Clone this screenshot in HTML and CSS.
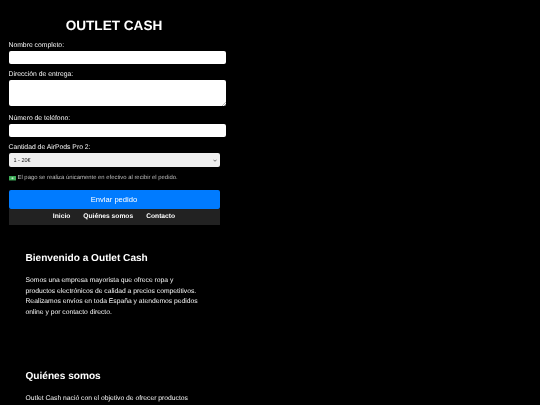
FILE: index.html
```html
<!DOCTYPE html>
<html lang="es">
<head>
<meta charset="utf-8">
<title>Outlet Cash</title>
<link rel="stylesheet" href="styles.css">
</head>
<body>
<main class="page">
  <h1 class="title">OUTLET CASH</h1>
  <form class="form">
    <label class="label">Nombre completo:</label>
    <input class="field field-input" type="text">
    <label class="label">Dirección de entrega:</label>
    <textarea class="field field-area"></textarea>
    <label class="label">Número de teléfono:</label>
    <input class="field field-input" type="tel">
    <label class="label">Cantidad de AirPods Pro 2:</label>
    <select class="select"><option>1 - 20€</option></select>
    <p class="note"><svg class="bill" viewBox="0 0 8 5"><rect width="8" height="5" fill="#3fae5a"/><circle cx="4" cy="2.5" r="1.2" fill="#bfe8c6"/></svg>El pago se realiza únicamente en efectivo al recibir el pedido.</p>
    <button class="submit" type="button">Enviar pedido</button>
  </form>
  <nav class="nav"><a>Inicio</a><a>Quiénes somos</a><a>Contacto</a></nav>
  <section class="section">
    <h2 class="heading">Bienvenido a Outlet Cash</h2>
    <p class="text">Somos una empresa mayorista que ofrece ropa y productos electrónicos de calidad a precios competitivos. Realizamos envíos en toda España y atendemos pedidos online y por contacto directo.</p>
  </section>
  <section class="section section-next">
    <h2 class="heading">Quiénes somos</h2>
    <p class="text">Outlet Cash nació con el objetivo de ofrecer productos</p>
  </section>
</main>
</body>
</html>
```
FILE: styles.css
```css
html, body { margin: 0; height: 100%; background: #000; overflow: hidden; }
body { color: #fff; font-family: "Liberation Sans", Arial, sans-serif; text-rendering: geometricPrecision; }
.page { width: 211px; margin-left: 8.5px; transform: translateZ(0); }
.title { margin: 0; padding-top: 16.5px; height: 21.5px; line-height: 17px; font-size: 13.6px; font-weight: 700; text-align: center; }
.form { display: flex; flex-direction: column; align-items: flex-start; }
.label { display: block; font-size: 6.8px; line-height: 9px; margin-top: 3px; margin-bottom: 1px; color: #f4f4f4; }
.field { display: block; box-sizing: border-box; width: 217.5px; background: #fff; border: 0; border-radius: 2px; padding: 0; margin: 0 0 3px; }
.field-input { height: 13px; }
.field-area { height: 26px; resize: none; margin-bottom: 5px; background-image: url("data:image/svg+xml,%3Csvg xmlns='http://www.w3.org/2000/svg' viewBox='0 0 4 4'%3E%3Cpath d='M0 4L4 0M2 4L4 2' stroke='%23777' stroke-width='.5'/%3E%3C/svg%3E"); background-repeat: no-repeat; background-size: 4px 4px; background-position: right bottom; }
.select { display: block; width: 211px; height: 14px; margin: 0 0 7px; padding: 0 5px; appearance: none; font-family: inherit; font-size: 5.5px; color: #222; background-color: #efefef; background-image: url("data:image/svg+xml,%3Csvg xmlns='http://www.w3.org/2000/svg' viewBox='0 0 6 4'%3E%3Cpath d='M.7.8L3 3.2 5.3.8' fill='none' stroke='%23333' stroke-width='1'/%3E%3C/svg%3E"); background-repeat: no-repeat; background-size: 4px 3px; background-position: right 2.5px center; border: 0; border-radius: 2px; }
.note { display: flex; align-items: center; margin: 0 0 6.5px; height: 9px; font-size: 5.9px; line-height: 9px; color: #bbb; }
.bill { width: 7px; height: 4.5px; margin-right: 2px; }
.submit { display: block; width: 211px; height: 19px; padding: 0; border: 0; border-radius: 2px; background: #007bff; color: #fff; font-family: inherit; font-size: 7.6px; }
.nav { display: flex; justify-content: center; gap: 13px; height: 16px; background: #222; font-size: 6.7px; font-weight: 700; line-height: 15px; }
.section { padding: 0 17px; }
.heading { margin: 0; padding-top: 27px; font-size: 10.1px; line-height: 14px; font-weight: 700; }
.text { margin: 10.5px 0 0; font-size: 6.75px; line-height: 10.7px; color: #f4f4f4; width: 178px; }
.section-next { padding-top: 24px; }
```
